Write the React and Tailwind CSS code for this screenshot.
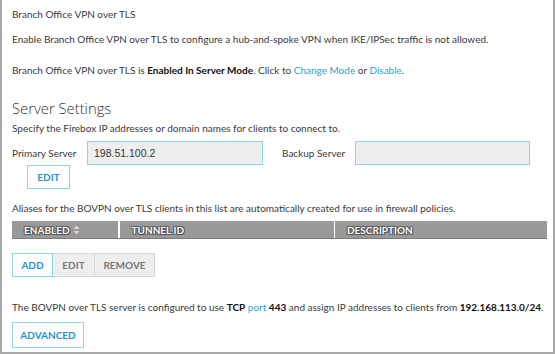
import React from "react";

function SortIcon() {
  return (
    <svg width="7" height="10" viewBox="0 0 7 10" className="ml-[3px] inline-block">
      <path d="M3.5 0.5 L6.5 4 L0.5 4 Z" fill="#d8d8d8" />
      <path d="M3.5 9.5 L6.5 6 L0.5 6 Z" fill="#d8d8d8" />
    </svg>
  );
}

export default function App() {
  const hdr =
    "text-white font-bold text-[10px] whitespace-nowrap [text-shadow:0_0_1px_#333,1px_1px_0_#555,-1px_-1px_0_#666,1px_-1px_0_#666,-1px_1px_0_#666]";
  return (
    <div
      className="w-[555px] h-[354px] bg-white border-l-2 border-r-2 border-b-2 border-[#a8a8a8] text-[10px] leading-[16px] text-[#3a3a3a] overflow-hidden whitespace-nowrap"
      style={{ fontFamily: 'Lato, "Open Sans", sans-serif' }}
    >
      <div className="pl-[10px] pr-[4px]">
        <p className="mt-[6px]">Branch Office VPN over TLS</p>
        <p className="mt-[9px]">
          Enable Branch Office VPN over TLS to configure a hub-and-spoke VPN when IKE/IPSec traffic is not allowed.
        </p>
        <p className="mt-[15px]">
          Branch Office VPN over TLS is <span className="font-bold text-[#111]">Enabled In Server Mode</span>. Click to{" "}
          <span className="text-[#2a9fd6]">Change Mode</span> or <span className="text-[#2a9fd6]">Disable</span>.
        </p>
        <h2
          className="mt-[20px] text-[14.8px] leading-[20px] font-light text-[#333]"
          style={{ fontFamily: '"Open Sans", sans-serif' }}
        >
          Server Settings
        </h2>
        <p className="mt-[2px]">Specify the Firebox IP addresses or domain names for clients to connect to.</p>
        <div className="mt-[5px] flex items-center h-[24px]">
          <span className="w-[75px]">Primary Server</span>
          <div
            className="w-[176px] h-[24px] bg-[#eeeeee] border border-[#8dd5e6] flex items-center pl-[6px] text-[#333] text-[10.5px]"
            style={{ fontFamily: '"Liberation Sans", Arial, sans-serif' }}
          >
            198.51.100.2
          </div>
          <span className="ml-[19px] w-[73px]">Backup Server</span>
          <div className="w-[175px] h-[24px] bg-[#eeeeee] border border-[#8dd5e6]"></div>
        </div>
        <button className="ml-[15px] w-[43px] h-[24px] border border-[#8dd5e6] bg-white text-[#1f94cc] font-bold text-[10px] flex items-center justify-center">
          EDIT
        </button>
        <p className="mt-[11px]">
          Aliases for the BOVPN over TLS clients in this list are automatically created for use in firewall policies.
        </p>
        <div className="mt-[5px] w-[535px] h-[18px] bg-[#999999] border-b border-[#7a7a7a] flex">
          <div className={`w-[106px] flex items-center pl-[12px] ${hdr}`}>
            ENABLED
            <SortIcon />
          </div>
          <div className="w-[1.5px] bg-white"></div>
          <div className={`w-[214px] flex items-center pl-[12px] ${hdr}`}>TUNNEL ID</div>
          <div className="w-[1.5px] bg-white"></div>
          <div className={`flex-1 flex items-center pl-[12px] ${hdr}`}>DESCRIPTION</div>
        </div>
        <div className="mt-[14px] flex h-[24px] text-[10px] font-bold">
          <button className="w-[41px] h-[24px] bg-white border border-[#8dd5e6] text-[#1f94cc] flex items-center justify-center">
            ADD
          </button>
          <button className="w-[42px] h-[24px] bg-[#eeeeee] border-y border-r border-[#d6d6d6] text-[#777] flex items-center justify-center">
            EDIT
          </button>
          <button className="w-[60px] h-[24px] bg-[#eeeeee] border-y border-r border-[#d6d6d6] text-[#777] flex items-center justify-center">
            REMOVE
          </button>
        </div>
        <p className="mt-[22px]">
          The BOVPN over TLS server is configured to use <span className="font-bold text-[#111]">TCP</span>{" "}
          <span className="text-[#2a9fd6]">port</span> <span className="font-bold text-[#111]">443</span> and assign IP
          addresses to clients from <span className="font-bold text-[#111]">192.168.113.0/24</span>.
        </p>
        <button className="mt-[7px] w-[72px] h-[26px] border border-[#8dd5e6] bg-white text-[#1f94cc] font-bold text-[10px] flex items-center justify-center">
          ADVANCED
        </button>
      </div>
    </div>
  );
}
